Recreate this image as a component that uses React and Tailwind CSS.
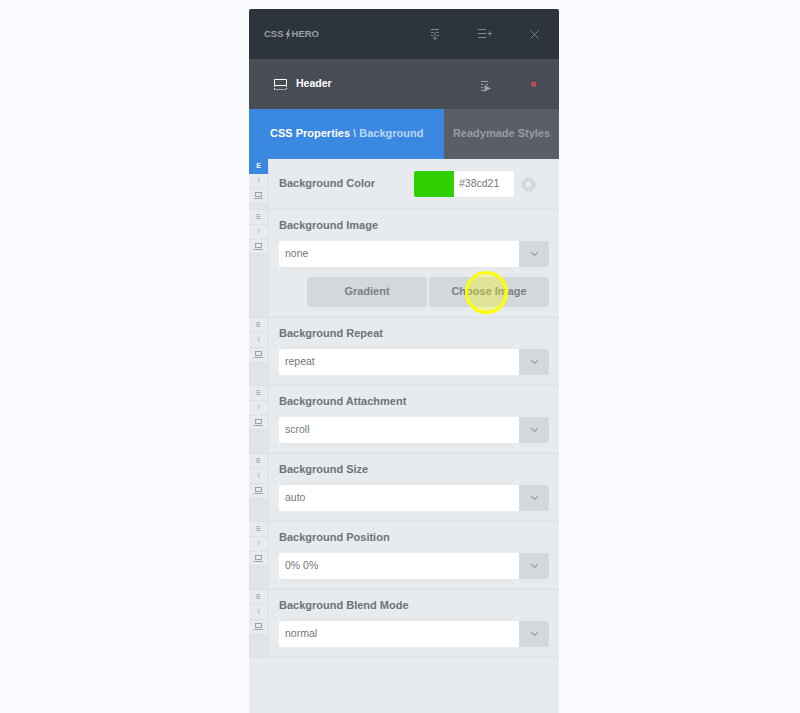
const F = '[font-family:"Liberation_Sans",Arial,sans-serif]';

function Side({ active }) {
  return (
    <div className="w-[20px] shrink-0 bg-[#e0e4e7] border-r border-[#dce0e3] self-stretch flex flex-col">
      <div className={`h-[15px] flex items-center justify-center text-[7px] leading-none border-b pb-[1px] ${active ? 'bg-[#3a88e0] text-white border-[#3a88e0] font-bold' : 'bg-[#e8ebee] text-[#8a9094] border-[#dde1e4]'}`}>E</div>
      <div className="h-[15px] bg-[#e8ebee] border-b border-[#dde1e4] flex items-center justify-center text-[8px] leading-none text-[#a0a5a9]">!</div>
      <div className="h-[15px] bg-[#e8ebee] border-b border-[#dde1e4] flex items-center justify-center pb-[2px]">
        <svg width="9" height="7" viewBox="0 0 9 7" fill="none" stroke="#949a9f" strokeWidth="0.9">
          <rect x="1.5" y="0.5" width="6" height="4" />
          <path d="M0 6.5h9" />
        </svg>
      </div>
    </div>
  );
}

function Select({ value }) {
  return (
    <div className="h-[26px] flex rounded-[2px] overflow-hidden">
      <div className="flex-1 bg-white flex items-center pl-[6px] text-[10.5px] text-[#75787c]">{value}</div>
      <div className="w-[30px] bg-[#d2d8db] flex items-center justify-center">
        <svg width="9" height="6" viewBox="0 0 9 6" fill="none" stroke="#9aa1a6" strokeWidth="1.2">
          <path d="M1 1l3.5 3.5L8 1" />
        </svg>
      </div>
    </div>
  );
}

function Field({ label, value }) {
  return (
    <div className="flex h-[68px] border-b border-[#dce0e3]">
      <Side />
      <div className="flex-1 pl-[10px] pr-[10px] pt-[7px]">
        <div className="h-[16px] mb-[8px] flex items-center text-[11px] font-bold text-[#6e7378]">{label}</div>
        <Select value={value} />
      </div>
    </div>
  );
}

export default function App() {
  return (
    <div className={`relative min-h-[713px] h-[713px] overflow-hidden bg-[#f9fbff] pt-[9px] ${F}`}>
      <div className="ml-[249px] w-[310px] h-[704px] bg-[#e7ebee] rounded-t-[2px] overflow-hidden">
        <div className="h-[50px] bg-[#2e343d] flex items-center relative">
          <div className="ml-[15px] flex items-center text-[9.5px] font-bold text-[#98a1a8]">
            <span>CSS</span>
            <svg width="6" height="11" viewBox="0 0 6 11" className="mx-[1px]"><path d="M4 0L0.5 6H2.5L1.5 11L5.5 4.5H3.5L4.5 0Z" fill="#98a1a8" /></svg>
            <span>HERO</span>
          </div>
          <svg className="absolute left-[181px] top-[20px]" width="10" height="11" viewBox="0 0 10 11" fill="none" stroke="#7f8890" strokeWidth="1">
            <path d="M1 .5h8M1 3.5h2.5M6.5 3.5H9M1 6.5h2M7 6.5h2M5 3v7.5M3 8.5l2 2 2-2" />
          </svg>
          <svg className="absolute left-[229px] top-[20px]" width="14" height="9" viewBox="0 0 14 9" fill="none" stroke="#7f8890" strokeWidth="1">
            <path d="M0 .5h8M0 4.5h8M0 8.5h8M9.5 4.5H14M11.75 2.2v4.6" />
          </svg>
          <svg className="absolute left-[281px] top-[21px]" width="9" height="9" viewBox="0 0 9 9" fill="none" stroke="#7f8890" strokeWidth="0.9">
            <path d="M.5.5l8 8M8.5.5l-8 8" />
          </svg>
        </div>

        <div className="h-[50px] bg-[#474c55] flex items-center relative">
          <svg className="ml-[25px]" width="13" height="11" viewBox="0 0 13 11" fill="none" stroke="#fff" strokeWidth="1">
            <path d="M.5 6.5v-6h12v6H.5z" />
            <path d="M.5 7v4M12.5 7v4M.5 10.5h12" strokeDasharray="1 1" />
          </svg>
          <span className="ml-[9px] text-[10.5px] font-bold text-white">Header</span>
          <svg className="absolute left-[232px] top-[22px]" width="10" height="11" viewBox="0 0 10 11" fill="none">
            <path d="M0 .5h7M0 3.5h2M5 3.5h2M0 6.5h2M0 9.5h4" stroke="#9aa1a8" />
            <path d="M3.5 4v7l2-1.5L10 7.5z" fill="#9aa1a8" />
          </svg>
          <span className="absolute left-[282px] top-[21px] text-[7px] leading-[9px] font-bold text-[#f24d4d]">R</span>
        </div>

        <div className="h-[50px] flex text-[11px] font-bold">
          <div className="w-[195px] bg-[#3a88e0] flex items-center pl-[21px] pb-[2px] text-white">
            CSS Properties<span className="ml-[3px] text-[#bcd7f5]">\ Background</span>
          </div>
          <div className="flex-1 bg-[#595e67] flex items-center justify-center pb-[2px] text-[#989da3]">Readymade Styles</div>
        </div>

        <div className="flex h-[51px] border-b border-[#dce0e3]">
          <Side active />
          <div className="flex-1 pl-[10px] flex items-center">
            <span className="text-[11px] font-bold text-[#6e7378] pb-[2px]">Background Color</span>
            <div className="ml-[39px] flex h-[26px] w-[100px] rounded-[2px] overflow-hidden mb-[1px]">
              <div className="w-[40px] bg-[#2fd000]" />
              <div className="flex-1 bg-white flex items-center pl-[5px] text-[10.5px] text-[#75787c]">#38cd21</div>
            </div>
            <svg className="ml-[7px]" width="15" height="15" viewBox="0 0 15 15" fill="none" stroke="#d0d6d9" strokeWidth="4.4">
              <circle cx="7.5" cy="7.5" r="5" strokeDasharray="3.3 0.63" />
            </svg>
          </div>
        </div>

        <div className="flex h-[108px] border-b border-[#dce0e3]">
          <Side />
          <div className="flex-1 pl-[10px] pr-[10px] pt-[7px]">
            <div className="h-[16px] mb-[8px] flex items-center text-[11px] font-bold text-[#6e7378]">Background Image</div>
            <Select value="none" />
            <div className="mt-[10px] ml-[28px] flex gap-[2px]">
              <div className="w-[120px] h-[30px] rounded-[2px] bg-[#d2d8db] flex items-center justify-center pb-[2px] text-[11px] font-bold text-[#7a8085]">Gradient</div>
              <div className="flex-1 h-[30px] rounded-[2px] bg-[#d2d8db] flex items-center justify-center pb-[2px] text-[11px] font-bold text-[#7a8085]">Choose Image</div>
            </div>
          </div>
        </div>

        <Field label="Background Repeat" value="repeat" />
        <Field label="Background Attachment" value="scroll" />
        <Field label="Background Size" value="auto" />
        <Field label="Background Position" value="0% 0%" />
        <Field label="Background Blend Mode" value="normal" />
      </div>
      <div className="absolute left-[465px] top-[271px] w-[43px] h-[43px] rounded-full border-[3px] border-[#ffff00] bg-[#ffff00]/30" />
    </div>
  );
}
